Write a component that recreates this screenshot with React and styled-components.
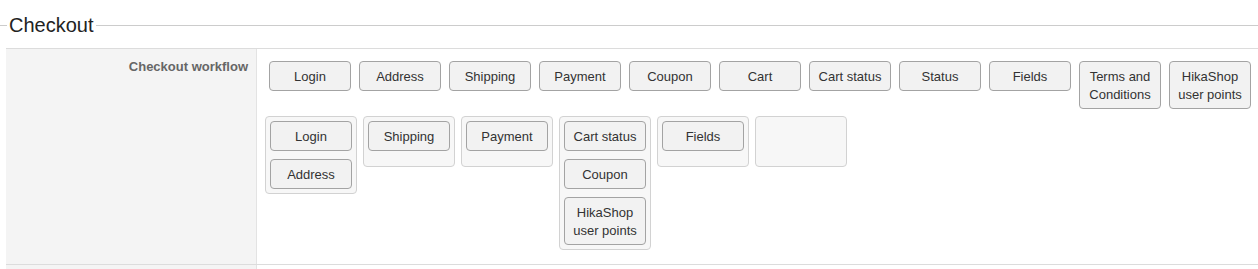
import React from "react";
import styled, { createGlobalStyle } from "styled-components";

const GlobalStyle = createGlobalStyle`
  html, body { margin: 0; padding: 0; background: #fff; }
  body { font-family: "Liberation Sans", Arial, sans-serif; color: #333; }
  * { box-sizing: border-box; }
`;

const Page = styled.div`
  padding-top: 14px;
  width: 1258px;
  height: 269px;
  overflow: hidden;
`;

const Legend = styled.div`
  display: flex;
  align-items: center;
  height: 22px;
  font-size: 20px;
  line-height: 22px;
  color: #222;
  &::before, &::after {
    content: "";
    height: 1px;
    background: #ccc;
  }
  &::before { width: 7px; }
  &::after { flex: 1; }
`;

const LegendText = styled.span`
  padding: 0 2px;
`;

const Table = styled.div`
  margin: 12px 0 0 6px;
  border-top: 1px solid #dcdcdc;
`;

const Row = styled.div`
  display: flex;
  border-bottom: 1px solid #dcdcdc;
  min-height: ${(p) => p.$minHeight || 0}px;
`;

const Label = styled.div`
  width: 251px;
  flex: none;
  background: #f4f4f4;
  border-right: 1px solid #e3e3e3;
  padding: 9px 8px 0 0;
  text-align: right;
  font-size: 13px;
  line-height: 18px;
  font-weight: bold;
  color: #666;
`;

const Content = styled.div`
  flex: 1;
  padding: 12px 0 14px 8px;
`;

const TopRow = styled.div`
  display: flex;
  align-items: flex-start;
  gap: 8px;
  padding-left: 4px;
`;

const GroupRow = styled.div`
  display: flex;
  align-items: flex-start;
  gap: 6px;
  margin-top: 7px;
`;

const Group = styled.div`
  width: 92px;
  min-height: 51px;
  display: flex;
  flex-direction: column;
  gap: 8px;
  padding: 4px;
  border: 1px solid #d2d2d2;
  border-radius: 4px;
  background: #f7f7f7;
`;

const Button = styled.div`
  width: 82px;
  flex: none;
  padding: 6px 4px 4px;
  border: 1px solid #a3a3a3;
  border-radius: 4px;
  background: #f2f2f2;
  font-size: 13px;
  line-height: 18px;
  color: #333;
  text-align: center;
`;

const topItems = [
  "Login",
  "Address",
  "Shipping",
  "Payment",
  "Coupon",
  "Cart",
  "Cart status",
  "Status",
  "Fields",
  "Terms and Conditions",
  "HikaShop user points",
];

const groups = [
  ["Login", "Address"],
  ["Shipping"],
  ["Payment"],
  ["Cart status", "Coupon", "HikaShop user points"],
  ["Fields"],
  [],
];

export default function App() {
  return (
    <>
      <GlobalStyle />
      <Page>
        <Legend>
          <LegendText>Checkout</LegendText>
        </Legend>
        <Table>
          <Row>
            <Label>Checkout workflow</Label>
            <Content>
              <TopRow>
                {topItems.map((t) => (
                  <Button key={t}>{t}</Button>
                ))}
              </TopRow>
              <GroupRow>
                {groups.map((g, i) => (
                  <Group key={i}>
                    {g.map((t) => (
                      <Button key={t}>{t}</Button>
                    ))}
                  </Group>
                ))}
              </GroupRow>
            </Content>
          </Row>
          <Row $minHeight={40}>
            <Label />
            <Content />
          </Row>
        </Table>
      </Page>
    </>
  );
}
